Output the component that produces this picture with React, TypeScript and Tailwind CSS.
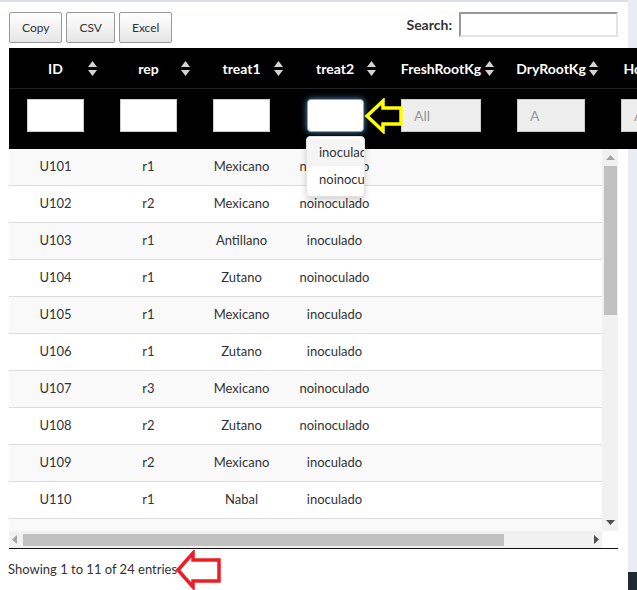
import React from "react"

const font = { fontFamily: "Lato, 'Open Sans', sans-serif" }

const cols = [
  { key: "ID", w: "w-[93px]", input: "w-[57px]", pl: "pl-[18px]" },
  { key: "rep", w: "w-[93px]", input: "w-[57px]", pl: "pl-[18px]" },
  { key: "treat1", w: "w-[93px]", input: "w-[57px]", pl: "pl-[18px]" },
  { key: "treat2", w: "w-[93px]", input: "w-[57px]", pl: "pl-[19px]" },
  { key: "FreshRootKg", w: "w-[118px]", input: "w-[80px]", pl: "pl-[20px]" },
  { key: "DryRootKg", w: "w-[104px]", input: "w-[68px]", pl: "pl-[18px]" },
  { key: "HdRootKg", w: "w-[106px]", input: "w-[70px]", pl: "pl-[18px]" },
]

// last row only peeks in under the scroll bar, its text is out of view
const rows = [
  ["U101", "r1", "Mexicano", "noinoculado"],
  ["U102", "r2", "Mexicano", "noinoculado"],
  ["U103", "r1", "Antillano", "inoculado"],
  ["U104", "r1", "Zutano", "noinoculado"],
  ["U105", "r1", "Mexicano", "inoculado"],
  ["U106", "r1", "Zutano", "inoculado"],
  ["U107", "r3", "Mexicano", "noinoculado"],
  ["U108", "r2", "Zutano", "noinoculado"],
  ["U109", "r2", "Mexicano", "inoculado"],
  ["U110", "r1", "Nabal", "inoculado"],
  [],
]

const SortIcon = () => (
  <svg width="9" height="15" viewBox="0 0 9 15" className="absolute right-[5px] top-[13px]">
    <path d="M4.5 0 L9 6 L0 6 Z" fill="#d4d4d4" />
    <path d="M4.5 15 L9 9 L0 9 Z" fill="#d4d4d4" />
  </svg>
)

const Btn = ({ children }: { children: React.ReactNode }) => (
  <button className="h-[31px] px-[12px] rounded-[2px] border border-[#999] bg-gradient-to-b from-white to-[#e6e6e6] text-[12px] text-[#333]">
    {children}
  </button>
)

export default function App() {
  const placeholders = ["", "", "", "", "All", "A", "A"]
  return (
    <div className="flex w-[637px] h-[590px] overflow-hidden bg-white text-[#333]" style={font}>
      <div className="relative w-[628px] shrink-0">
        <div className="h-[2px] bg-[#dcdfe6]" />
        <div className="flex items-start justify-between pl-[9px] pr-[10px] pt-[10px] h-[46px]">
          <div className="flex gap-[4px]">
            <Btn>Copy</Btn>
            <Btn>CSV</Btn>
            <Btn>Excel</Btn>
          </div>
          <label className="flex items-center gap-[7px] text-[14px] font-bold">
            Search:
            <input className="w-[159px] h-[25px] border-2 border-t-[#999] border-l-[#999] border-b-[#e3e3e3] border-r-[#e3e3e3] outline-none" />
          </label>
        </div>

        <div className="relative z-10 ml-[9px] w-[628px] overflow-hidden bg-black">
          <div className="flex w-max h-[41px] border-b border-[#222]">
            {cols.map((c) => (
              <div key={c.key} className={`relative ${c.w} shrink-0 ${c.pl} pr-[18px] flex items-center justify-center text-[14px] font-bold text-white`}>
                {c.key}
                <SortIcon />
              </div>
            ))}
          </div>
          <div className="flex w-max h-[60px]">
            {cols.map((c, i) => (
              <div key={c.key} className={`${c.w} shrink-0 ${c.pl} pt-[10px]`}>
                {i === 3 ? (
                  <div className={`${c.input} h-[33px] rounded-[4px] bg-white border border-[#66afe9] shadow-[0_0_6px_rgba(102,175,233,0.8)]`} />
                ) : (
                  <div className={`${c.input} h-[33px] border border-[#ccc] ${i > 3 ? "bg-[#eee]" : "bg-white"} text-[14px] text-[#999] pl-[12px] flex items-center`}>
                    {placeholders[i]}
                  </div>
                )}
              </div>
            ))}
          </div>
        </div>

        <div className="ml-[9px] flex h-[382px]">
          <div className="w-[593px] overflow-hidden">
            {rows.map((r, i) => (
              <div key={i} className={`flex w-max h-[37px] border-b border-[#ddd] ${i % 2 === 0 ? "bg-[#f9f9f9]" : "bg-white"}`}>
                {cols.map((c, j) => (
                  <div key={c.key} className={`${c.w} shrink-0 flex items-center justify-center text-[13px] text-[#333]`}>
                    {r[j] ?? ""}
                  </div>
                ))}
              </div>
            ))}
          </div>
          <div className="w-[16px] bg-[#f1f1f1] flex flex-col items-center justify-between py-[6px]">
            <svg width="9" height="5" viewBox="0 0 9 5"><path d="M4.5 0 L9 5 L0 5 Z" fill="#a3a3a3" /></svg>
            <svg width="9" height="5" viewBox="0 0 9 5"><path d="M4.5 5 L9 0 L0 0 Z" fill="#505050" /></svg>
          </div>
        </div>
        <div className="ml-[9px] flex h-[17px]">
          <div className="w-[593px] bg-[#f1f1f1] flex items-center justify-between px-[3px]">
            <svg width="5" height="9" viewBox="0 0 5 9"><path d="M0 4.5 L5 0 L5 9 Z" fill="#a3a3a3" /></svg>
            <div className="w-[481px] h-[12px] mr-auto ml-[6px] bg-[#c1c1c1]" />
            <svg width="5" height="9" viewBox="0 0 5 9"><path d="M5 4.5 L0 0 L0 9 Z" fill="#505050" /></svg>
          </div>
          <div className="w-[16px] bg-white" />
        </div>
        <div className="ml-[9px] w-[609px] h-[1px] bg-[#111]" />
        <div className="pl-[8px] h-[42px] flex items-center text-[13px] text-[#333]">
          Showing 1 to 11 of 24 entries
          <svg width="46" height="40" viewBox="0 0 46 40" className="-ml-[1px]">
            <path d="M2 20 L17 3 L17 10 L43 10 L43 31 L17 31 L17 37 Z" fill="white" stroke="#ee1c25" strokeWidth="3.5" />
          </svg>
        </div>

        {/* vertical scroll thumb */}
        <div className="absolute left-[604px] top-[166px] w-[13px] h-[149px] bg-[#c1c1c1]" />

        {/* treat2 select dropdown */}
        <div className="absolute z-20 left-[306px] top-[136px] w-[59px] h-[61px] overflow-hidden bg-white rounded-[4px] border border-[#e2e2e2] shadow-[0_3px_6px_rgba(0,0,0,0.18)] pt-[2px] text-[13px] text-[#333]">
          <div className="h-[27px] pl-[12px] flex items-center bg-[#f5f5f5] whitespace-nowrap">inoculado</div>
          <div className="h-[27px] pl-[12px] flex items-center whitespace-nowrap">noinoculado</div>
        </div>

        {/* yellow annotation arrow */}
        <svg width="40" height="36" viewBox="0 0 40 36" className="absolute z-20 left-[364px] top-[98px]">
          <path d="M3 18 L19 3 L19 10 L37 10 L37 26 L19 26 L19 33 Z" fill="none" stroke="#ffff00" strokeWidth="3.5" />
        </svg>
      </div>
      <div className="flex flex-col w-[9px] shrink-0">
        <div className="flex-1 bg-[#e9edf3]" />
        <div className="h-[18px] bg-[#1e2b30]" />
      </div>
    </div>
  )
}
